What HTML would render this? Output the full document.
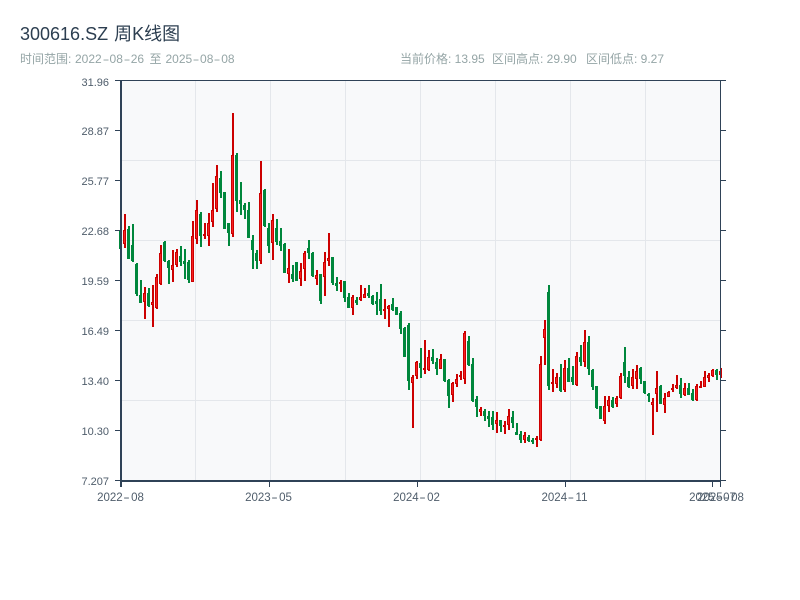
<!DOCTYPE html>
<html lang="zh"><head><meta charset="utf-8"><title>300616.SZ 周K线图</title>
<style>
html,body{margin:0;padding:0;background:#fff}
body{width:800px;height:600px;overflow:hidden;position:relative}
svg{position:absolute;left:0;top:0}
text,div{font-family:"Liberation Sans","Noto Sans CJK SC",sans-serif}
.t{position:absolute;white-space:nowrap}
.s{font-size:12px;color:#95a5a6;top:52px;line-height:14px}
.s .h{display:inline-block;transform:scaleX(1.7);margin:0 .16em}
.x{font-size:11.5px;color:#4f5d6b;top:491px;line-height:14px;transform:translateX(-50%)}
.x .h{display:inline-block;transform:scaleX(1.7);margin:0 .2em}
</style></head><body>
<svg width="800" height="600" viewBox="0 0 800 600" xmlns="http://www.w3.org/2000/svg">
<text x="20" y="40" font-size="18" fill="#2c3e50">300616.SZ <tspan dx="1">周K线图</tspan></text>
<text x="400" y="63" font-size="12" fill="#95a5a6">当前价格: 13.95</text>
<text x="492" y="63" font-size="12" fill="#95a5a6">区间高点: 29.90</text>
<text x="586" y="63" font-size="12" fill="#95a5a6">区间低点: 9.27</text>
<rect x="121" y="81" width="600" height="400" fill="#f8f9fa"/>
<path stroke="#e4e7eb" fill="none" d="M122 160.500H720M122 240.500H720M122 320.500H720M122 400.500H720M195.500 81V480M270.500 81V480M345.500 81V480M420.500 81V480M495.500 81V480M570.500 81V480M645.500 81V480"/>
<path fill="none" stroke="#c00" stroke-width="2" d="M125 214V248M145 287V319M153 285V327M157 274V309M161 245V285M173 250V282M177 249V267M193 221V282M197 200V244M205 223V239M209 213V246M213 183V227M217 165V212M233 113V237M261 161V264M273 214V260M289 249V283M301 263V286M305 251V281M317 270V285M325 252V296M329 233V266M341 280V292M353 295V315M361 285V301M365 288V298M385 299V319M389 305V327M413 375V428M417 361V379M425 340V374M429 350V371M441 354V369M453 382V402M457 374V387M461 371V380M465 331V384M481 407V416M497 412V433M505 421V434M509 409V430M525 432V443M537 436V447M541 356V441M545 320V365M553 369V392M557 373V388M565 360V392M577 352V386M585 330V367M605 396V424M609 396V412M617 396V407M621 373V399M633 369V389M637 365V389M653 398V435M657 371V412M665 393V413M669 391V397M673 384V392M677 375V389M685 383V396M697 384V401M701 381V388M705 371V387M709 373V382M713 369V377M721 368V378"/>
<path fill="#f52020" stroke="#c00" d="M123.500 230.500h2V243.500h-2zM143.500 293.500h2V301.500h-2zM151.500 302.500h2V304.500h-2zM155.500 277.500h2V307.500h-2zM159.500 253.500h2V283.500h-2zM171.500 265.500h2V269.500h-2zM175.500 252.500h2V264.500h-2zM191.500 236.500h2V281.500h-2zM195.500 210.500h2V238.500h-2zM203.500 234.500h2V235.500h-2zM207.500 223.500h2V235.500h-2zM211.500 210.500h2V221.500h-2zM215.500 176.500h2V208.500h-2zM231.500 155.500h2V233.500h-2zM259.500 193.500h2V260.500h-2zM271.500 220.500h2V242.500h-2zM287.500 268.500h2V273.500h-2zM299.500 271.500h2V278.500h-2zM303.500 253.500h2V268.500h-2zM315.500 275.500h2V278.500h-2zM323.500 262.500h2V276.500h-2zM327.500 258.500h2V260.500h-2zM339.500 282.500h2V283.500h-2zM351.500 297.500h2V307.500h-2zM359.500 297.500h2V299.500h-2zM363.500 294.500h2V297.500h-2zM383.500 309.500h2V310.500h-2zM387.500 306.500h2V308.500h-2zM411.500 377.500h2V382.500h-2zM415.500 362.500h2V375.500h-2zM423.500 368.500h2V369.500h-2zM427.500 357.500h2V369.500h-2zM439.500 359.500h2V368.500h-2zM451.500 383.500h2V394.500h-2zM455.500 379.500h2V383.500h-2zM459.500 375.500h2V376.500h-2zM463.500 333.500h2V378.500h-2zM479.500 409.500h2V411.500h-2zM495.500 420.500h2V423.500h-2zM503.500 425.500h2V426.500h-2zM507.500 416.500h2V424.500h-2zM523.500 435.500h2V439.500h-2zM535.500 438.500h2V439.500h-2zM539.500 364.500h2V439.500h-2zM543.500 329.500h2V337.500h-2zM551.500 382.500h2V383.500h-2zM555.500 377.500h2V383.500h-2zM563.500 368.500h2V389.500h-2zM575.500 356.500h2V384.500h-2zM583.500 342.500h2V361.500h-2zM603.500 406.500h2V420.500h-2zM607.500 400.500h2V405.500h-2zM615.500 398.500h2V403.500h-2zM619.500 376.500h2V397.500h-2zM631.500 377.500h2V385.500h-2zM635.500 371.500h2V378.500h-2zM651.500 402.500h2V404.500h-2zM655.500 388.500h2V393.500h-2zM663.500 398.500h2V404.500h-2zM667.500 392.500h2V396.500h-2zM671.500 388.500h2V389.500h-2zM675.500 385.500h2V387.500h-2zM683.500 388.500h2V394.500h-2zM695.500 386.500h2V399.500h-2zM699.500 386.500h2V387.500h-2zM703.500 377.500h2V386.500h-2zM707.500 375.500h2V377.500h-2zM711.500 370.500h2V375.500h-2zM719.500 371.500h2V374.500h-2z"/>
<path fill="none" stroke="#00873c" stroke-width="2" d="M121 230V249M129 226V259M133 224V262M137 263V296M141 280V303M149 288V307M165 241V262M169 260V284M181 246V266M185 249V279M189 260V283M201 212V247M221 171V198M225 192V229M229 223V246M237 153V212M241 182V215M245 203V219M249 202V238M253 235V269M257 250V269M265 189V227M269 223V253M277 219V245M281 228V251M285 243V273M293 265V282M297 262V281M309 240V259M313 252V277M321 274V304M333 257V285M337 277V291M345 281V302M349 293V308M357 297V305M369 285V298M373 295V305M377 292V315M381 284V315M393 298V311M397 307V315M401 311V334M405 327V357M409 323V390M421 348V378M433 349V364M437 358V375M445 359V382M449 379V408M469 336V366M473 358V402M477 396V417M485 409V421M489 411V427M493 411V430M501 420V432M513 411V428M517 423V435M521 431V443M529 435V442M533 438V444M549 285V390M561 364V392M569 358V382M573 366V385M581 345V366M589 336V375M593 369V390M597 386V409M601 406V419M613 397V408M625 347V383M629 371V388M641 367V384M645 381V394M649 393V402M661 385V404M681 378V398M689 383V395M693 389V401M717 369V380"/>
<path fill="none" stroke="#00873c" stroke-width="3" d="M120.500 230V249M128.500 229V259M132.500 245V261M136.500 264V294M140.500 295V303M148.500 293V306M164.500 242V261M168.500 261V268M180.500 256V262M184.500 261V264M188.500 262V280M200.500 214V236M220.500 178V193M224.500 192V229M228.500 223V233M236.500 155V201M240.500 200V204M244.500 205V210M248.500 210V238M252.500 240V250M256.500 253V261M264.500 190V226M268.500 228V246M276.500 228V242M280.500 241V246M284.500 244V273M292.500 274V279M296.500 262V281M308.500 248V253M312.500 253V276M320.500 274V301M332.500 257V283M336.500 283V286M344.500 281V298M348.500 297V308M356.500 300V303M368.500 293V296M372.500 296V304M376.500 301V304M380.500 299V311M392.500 304V310M396.500 307V315M400.500 313V329M404.500 328V357M408.500 325V381M420.500 363V368M432.500 357V361M436.500 362V369M444.500 359V381M448.500 380V396M468.500 341V365M472.500 364V401M476.500 399V407M484.500 411V416M488.500 416V419M492.500 417V425M500.500 420V426M512.500 417V423M516.500 432V435M520.500 434V440M528.500 437V441M532.500 440V442M548.500 292V386M560.500 377V391M568.500 368V382M572.500 377V382M580.500 357V362M588.500 342V369M592.500 370V387M596.500 386V408M600.500 406V419M612.500 400V407M624.500 362V376M628.500 377V387M640.500 368V379M644.500 381V393M648.500 394V396M660.500 386V404M680.500 385V394M688.500 388V395M692.500 393V400M716.500 370V375"/>
<path fill="none" stroke="#2f4257" d="M115 80.500H721M720.500 80V487M115 130.500H120M115 180.500H120M115 230.500H120M115 280.500H120M115 330.500H120M115 380.500H120M115 430.500H120M115 480.500H120M721 80.500H726M721 130.500H726M721 180.500H726M721 230.500H726M721 280.500H726M721 330.500H726M721 380.500H726M721 430.500H726M721 480.500H726M269.500 482V487M417.500 482V487M565.500 482V487M712.500 482V487"/>
<path fill="none" stroke="#2f4257" stroke-width="2" d="M121 80V487M120 481H721"/>
<g font-size="11" fill="#4f5d6b" text-anchor="end">
<text x="109" y="86">31.96</text><text x="109" y="135">28.87</text><text x="109" y="185">25.77</text><text x="109" y="235">22.68</text><text x="109" y="285">19.59</text><text x="109" y="335">16.49</text><text x="109" y="385">13.40</text><text x="109" y="435">10.30</text><text x="109" y="485">7.207</text>
</g>
</svg>
<div class="t s" style="left:20px">时间范围: </div>
<div class="t s" style="left:75px">2022<span class="h">-</span>08<span class="h">-</span>26</div>
<div class="t s" style="left:149.500px">至</div>
<div class="t s" style="left:165.500px">2025<span class="h">-</span>08<span class="h">-</span>08</div>
<div class="t x" style="left:120.500px">2022<span class="h">-</span>08</div>
<div class="t x" style="left:268.500px">2023<span class="h">-</span>05</div>
<div class="t x" style="left:416.500px">2024<span class="h">-</span>02</div>
<div class="t x" style="left:564.500px">2024<span class="h">-</span>11</div>
<div class="t x" style="left:712.500px">2025<span class="h">-</span>07</div>
<div class="t x" style="left:720.500px">2025<span class="h">-</span>08</div>
</body></html>
